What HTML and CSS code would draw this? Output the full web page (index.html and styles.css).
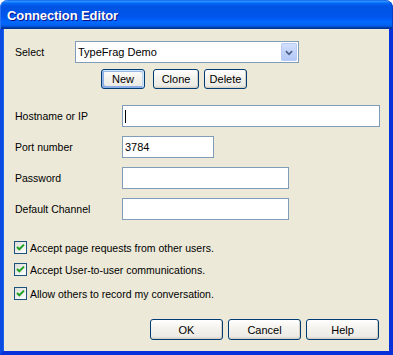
FILE: index.html
```html
<!DOCTYPE html>
<html>
<head>
<meta charset="utf-8">
<link rel="stylesheet" href="styles.css">
</head>
<body>
<div class="window">
  <div class="titlebar"><span class="title">Connection Editor</span></div>
  <div class="client">
    <div class="select-row">
      <span class="lbl lbl-select">Select</span>
      <div class="combo">
        <span class="combo-text">TypeFrag Demo</span>
        <span class="combo-btn">
          <svg width="16" height="19" viewBox="0 0 16 19"><path d="M4.5 8 L8 11.5 L11.5 8" fill="none" stroke="#4D6185" stroke-width="2"/></svg>
        </span>
      </div>
    </div>
    <div class="btn-row">
      <button class="btn btn-default btn-new">New</button>
      <button class="btn btn-clone">Clone</button>
      <button class="btn btn-delete">Delete</button>
    </div>
    <div class="fields">
      <div class="field"><span class="lbl lbl-field">Hostname or IP</span><div class="input w-host"><span class="caret"></span></div></div>
      <div class="field"><span class="lbl lbl-field">Port number</span><div class="input w-port">3784</div></div>
      <div class="field"><span class="lbl lbl-field">Password</span><div class="input w-mid"></div></div>
      <div class="field"><span class="lbl lbl-field">Default Channel</span><div class="input w-mid"></div></div>
    </div>
    <div class="checks">
      <div class="check c1"><span class="box"><svg width="11" height="11" viewBox="0 0 11 11"><path d="M2 5 L4.3 7.3 L9 2.6" fill="none" stroke="#21A121" stroke-width="2"/></svg></span><span class="lbl">Accept page requests from other users.</span></div>
      <div class="check c2"><span class="box"><svg width="11" height="11" viewBox="0 0 11 11"><path d="M2 5 L4.3 7.3 L9 2.6" fill="none" stroke="#21A121" stroke-width="2"/></svg></span><span class="lbl">Accept User-to-user communications.</span></div>
      <div class="check c3"><span class="box"><svg width="11" height="11" viewBox="0 0 11 11"><path d="M2 5 L4.3 7.3 L9 2.6" fill="none" stroke="#21A121" stroke-width="2"/></svg></span><span class="lbl">Allow others to record my conversation.</span></div>
    </div>
    <div class="footer">
      <button class="btn btn-wide">OK</button>
      <button class="btn btn-wide">Cancel</button>
      <button class="btn btn-wide">Help</button>
    </div>
  </div>
</div>
</body>
</html>
```
FILE: styles.css
```css
html, body {
  margin: 0;
  padding: 0;
  background: #ffffff;
}
.window {
  width: 393px;
  height: 355px;
  display: flex;
  flex-direction: column;
  font-family: "Liberation Sans", Arial, sans-serif;
  font-size: 10.5px;
  color: #000;
}
.titlebar {
  height: 29px;
  flex: none;
  box-sizing: border-box;
  border-radius: 8px 8px 0 0;
  background: linear-gradient(180deg, #0058EE 0%, #3593FF 4%, #288EFF 6%, #127DFF 8%, #036FFC 10%, #0262EE 14%, #0057E5 20%, #0054E3 24%, #0055EB 56%, #005BF5 66%, #026AFE 76%, #0062EF 86%, #0052D6 92%, #0040AB 94%, #003092 100%);
  box-shadow: inset 1px 0 #2b74f3, inset -1px 0 #0a3fc8;
  display: flex;
  align-items: center;
  padding: 2px 0 0 7px;
}
.title {
  color: #fff;
  font-family: "Liberation Sans", Arial, sans-serif;
  font-weight: bold;
  font-size: 13px;
  text-shadow: 1px 1px #0F1089;
  letter-spacing: -0.1px;
}
.client {
  flex: 1;
  background: #ECE9D8;
  border-left: 3px solid #0B4BE2;
  border-right: 4px solid #0831D9;
  border-bottom: 4px solid #0831D9;
  box-shadow: inset 1px 0 #1760EB;
  display: flex;
  flex-direction: column;
  padding: 12px 0 0 12px;
}
.lbl {
  white-space: nowrap;
}
.select-row {
  display: flex;
  align-items: center;
  height: 22px;
}
.lbl-select {
  width: 60px;
}
.combo {
  width: 224px;
  height: 22px;
  box-sizing: border-box;
  border: 1px solid #7F9DB9;
  background: #fff;
  display: flex;
  align-items: center;
  justify-content: space-between;
  padding: 0 1px 0 2px;
}
.combo-text {
  font-size: 11px;
}
.combo-btn {
  width: 16px;
  height: 18px;
  box-sizing: border-box;
  border: 1px solid #B9CBF3;
  border-radius: 1px;
  background: linear-gradient(180deg, #D3E0FD 0%, #C1D3FB 50%, #B4C8F6 100%);
  display: flex;
  align-items: center;
  justify-content: center;
}
.combo-btn svg {
  display: block;
}
.btn-row {
  display: flex;
  margin-top: 6px;
  padding-left: 86px;
  height: 20px;
}
.btn {
  font-family: "Liberation Sans", Arial, sans-serif;
  font-size: 11px;
  color: #000;
  height: 20px;
  box-sizing: border-box;
  border: 1px solid #003C74;
  border-radius: 3px;
  background: linear-gradient(180deg, #FFFFFF 0%, #F4F3EE 40%, #ECEBE6 86%, #D6D0C5 100%);
  box-shadow: inset -1px -1px #D6D0C5;
  padding: 0;
  margin: 0;
  display: flex;
  align-items: center;
  justify-content: center;
}
.btn-default {
  box-shadow: inset -1px 1px #CEE7FF, inset 1px 2px #98B8EA, inset -2px 2px #BCD4F6, inset 1px -1px #89ADE4, inset 2px -2px #89ADE4;
}
.btn-new { width: 44px; }
.btn-clone { width: 46px; margin-left: 8px; }
.btn-delete { width: 43px; margin-left: 5px; }
.fields {
  display: flex;
  flex-direction: column;
  gap: 9px;
  margin-top: 16px;
}
.field {
  display: flex;
  align-items: center;
  height: 22px;
}
.lbl-field {
  width: 107px;
}
.input {
  height: 22px;
  box-sizing: border-box;
  border: 1px solid #7F9DB9;
  background: #fff;
  padding: 0 0 0 2px;
  display: flex;
  align-items: center;
  font-size: 11px;
}
.w-host { width: 258px; }
.w-port { width: 92px; }
.w-mid { width: 167px; }
.caret {
  width: 1px;
  height: 13px;
  background: #000;
}
.checks {
  display: flex;
  flex-direction: column;
  margin-top: 21px;
  margin-left: -1px;
}
.check {
  display: flex;
  align-items: center;
  height: 13px;
  gap: 3px;
}
.c2 { margin-top: 9px; }
.c3 { margin-top: 11px; }
.box {
  width: 13px;
  height: 13px;
  box-sizing: border-box;
  border: 1px solid #1C5180;
  background: linear-gradient(135deg, #DCDCD7 0%, #FFFFFF 100%);
  display: flex;
  align-items: center;
  justify-content: center;
}
.box svg { display: block; }
.footer {
  display: flex;
  justify-content: flex-end;
  gap: 5px;
  margin-top: 19px;
  padding-right: 10px;
}
.btn-wide {
  width: 73px;
  height: 21px;
}
```
